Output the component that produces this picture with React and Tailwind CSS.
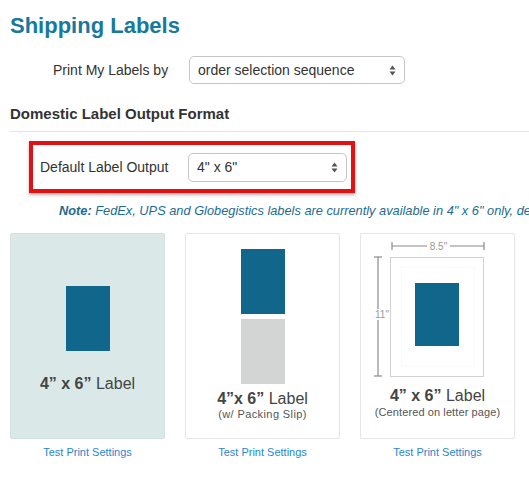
import React from 'react'

function SelectArrows() {
  return (
    <svg width="7" height="11" viewBox="0 0 7 11" className="shrink-0">
      <path d="M3.5 0.5 L6.5 4.5 L0.5 4.5 Z" fill="#555" />
      <path d="M3.5 10.5 L6.5 6.5 L0.5 6.5 Z" fill="#555" />
    </svg>
  )
}

function FakeSelect({ value, className }) {
  return (
    <div
      className={`flex items-center justify-between h-[28px] pl-[8px] pr-[8px] rounded-[5px] border border-[#c6c6c6] bg-white text-[14px] text-[#333] ${className}`}
    >
      <span>{value}</span>
      <SelectArrows />
    </div>
  )
}

function LetterDiagram() {
  return (
    <svg width="153" height="146" viewBox="0 0 153 146" className="block">
      {/* width dimension */}
      <line x1="31" y1="12" x2="66" y2="12" stroke="#8a8a8a" strokeWidth="1.2" />
      <line x1="89" y1="12" x2="123" y2="12" stroke="#8a8a8a" strokeWidth="1.2" />
      <line x1="31" y1="8" x2="31" y2="16" stroke="#8a8a8a" strokeWidth="1.2" />
      <line x1="123" y1="8" x2="123" y2="16" stroke="#8a8a8a" strokeWidth="1.2" />
      <text x="77.5" y="15.5" textAnchor="middle" fontSize="10" fill="#999" fontFamily="Liberation Sans, Arial, sans-serif">8.5"</text>
      {/* height dimension */}
      <line x1="17" y1="23" x2="17" y2="75" stroke="#8a8a8a" strokeWidth="1.2" />
      <line x1="17" y1="86" x2="17" y2="142" stroke="#8a8a8a" strokeWidth="1.2" />
      <line x1="13" y1="23" x2="21" y2="23" stroke="#8a8a8a" strokeWidth="1.2" />
      <line x1="13" y1="142" x2="21" y2="142" stroke="#8a8a8a" strokeWidth="1.2" />
      <text x="21" y="84" textAnchor="middle" fontSize="10" fill="#999" fontFamily="Liberation Sans, Arial, sans-serif">11"</text>
      {/* page */}
      <rect x="29.5" y="23.5" width="93" height="119" fill="#fff" stroke="#d2d2d2" strokeWidth="1" />
      <rect x="40.5" y="33.5" width="73" height="99" fill="none" stroke="#f8fafa" strokeWidth="1" />
      <rect x="54" y="49" width="44" height="63" fill="#10678b" />
    </svg>
  )
}

function Card({ children, className }) {
  return (
    <div className="flex flex-col items-center w-[155px]">
      <div className={`w-[155px] h-[206px] rounded-[2px] border ${className}`}>{children}</div>
      <a className="mt-[7px] text-[11px] leading-[13px] text-[#2a86cf]">Test Print Settings</a>
    </div>
  )
}

export default function App() {
  return (
    <div className="w-[529px] h-[482px] overflow-hidden bg-white font-['Liberation_Sans',Arial,sans-serif] text-[#333]">
      <h1 className="mt-[13px] pl-[10px] text-[22px] leading-[26px] font-bold text-[#17799c]">Shipping Labels</h1>

      <div className="flex items-center mt-[17px]">
        <span className="pl-[53px] w-[189px] text-[14px]">Print My Labels by</span>
        <FakeSelect value="order selection sequence" className="w-[216px]" />
      </div>

      <h2 className="mt-[21px] pl-[10px] text-[15px] leading-[18px] font-bold text-[#333]">
        Domestic Label Output Format
      </h2>
      <div className="mt-[8px] ml-[10px] h-px bg-[#e6e6e6]" />

      <div className="mt-[9px] ml-[29px] w-[326px] h-[52px] border-[4px] border-[#e21212] shadow-[0_2px_3px_rgba(0,0,0,0.3)] flex items-center pl-[7px] pr-[4px]">
        <span className="w-[148px] text-[14px]">Default Label Output</span>
        <FakeSelect value={'4" x 6"'} className="w-[159px] h-[29px]" />
      </div>

      <p className="mt-[11px] pl-[59px] whitespace-nowrap text-[12.8px] leading-[14px] italic text-[#1d6b93]">
        <b>Note:</b> FedEx, UPS and Globegistics labels are currently available in 4" x 6" only, default
      </p>

      <div className="flex gap-[20px] pl-[10px] mt-[15px]">
        <Card className="bg-[#dbe8e8] border-[#d3e1e1]">
          <div className="flex flex-col items-center pt-[52px]">
            <div className="w-[44px] h-[65px] bg-[#10678b]" />
            <div className="mt-[23px] text-[16px] leading-[20px] text-[#444]">
              <b>4” x 6”</b> Label
            </div>
          </div>
        </Card>
        <Card className="bg-white border-[#e6e6e6]">
          <div className="flex flex-col items-center pt-[15px]">
            <div className="w-[44px] h-[65px] bg-[#10678b]" />
            <div className="mt-[5px] w-[44px] h-[65px] bg-[#d3d4d4]" />
            <div className="mt-[7px] text-[16px] leading-[16px] text-[#444]">
              <b>4”x 6”</b> Label
            </div>
            <div className="text-[11px] leading-[14px] tracking-[0.4px] text-[#555]">(w/ Packing Slip)</div>
          </div>
        </Card>
        <Card className="bg-white border-[#e6e6e6]">
          <div className="flex flex-col items-center">
            <LetterDiagram />
            <div className="mt-[8px] text-[16px] leading-[16px] text-[#444]">
              <b>4” x 6”</b> Label
            </div>
            <div className="mt-[1px] text-[11px] leading-[14px] tracking-[0.1px] text-[#555]">(Centered on letter page)</div>
          </div>
        </Card>
      </div>
    </div>
  )
}
